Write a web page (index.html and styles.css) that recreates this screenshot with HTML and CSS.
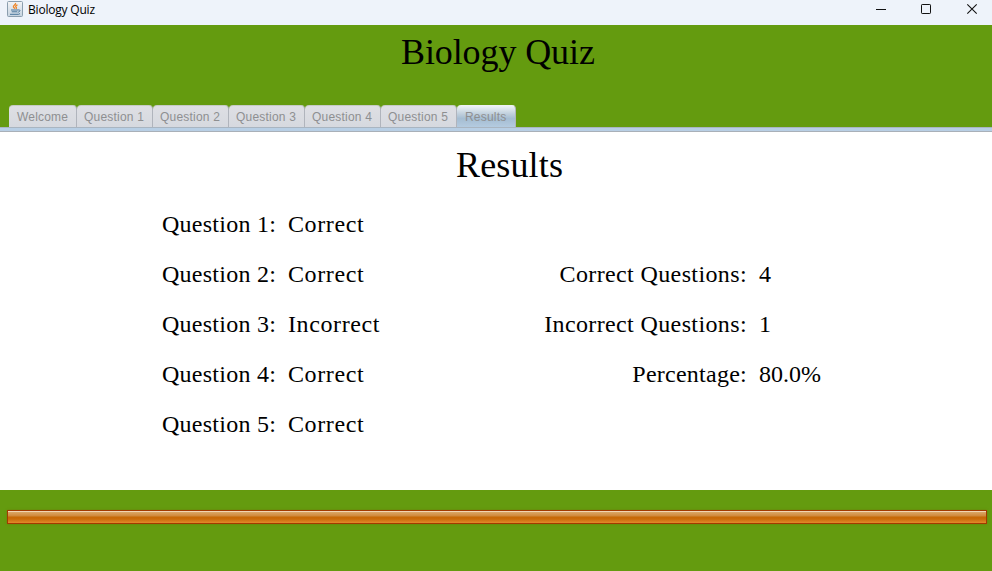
FILE: index.html
```html
<!DOCTYPE html>
<html lang="en">
<head>
<meta charset="utf-8">
<title>Biology Quiz</title>
<link rel="stylesheet" href="styles.css">
</head>
<body>
<header class="titlebar">
  <svg class="app-icon" width="16" height="16" viewBox="0 0 16 16">
    <defs><linearGradient id="tile" x2="0" y2="1"><stop stop-color="#f2f4f6"/><stop offset="1" stop-color="#c5d3df"/></linearGradient></defs>
    <rect x=".5" y=".5" width="15" height="15" rx="1" fill="url(#tile)" stroke="#8b9eae"/>
    <path d="M8.500 2c1 1.800-3 2.300-2 4 .3.700 1 1 1.200 1.700M10.500 3.900c-2.500 1-2 1.800-1.200 2.500.3.500 0 1-.5 1.300" fill="none" stroke="#ef8424" stroke-width="1.300"/>
    <path d="M4 9h7M4.700 10.800h5.500M3 13.300h8.500l1.500-.7M11 9c3-.6 2.300 2-.3 2.200" fill="none" stroke="#48759a"/>
  </svg>
  <span class="window-title">Biology Quiz</span>
  <svg class="controls" width="132" height="20" viewBox="0 0 132 20" fill="none" stroke="#111">
    <path d="M16 9.500h10"/>
    <rect x="61.500" y="4.500" width="9" height="9" rx=".7"/>
    <path d="M107.300 4.300l9.400 9.400M116.700 4.300l-9.400 9.400" stroke-width="1.100"/>
  </svg>
</header>
<h1 class="heading">Biology Quiz</h1>
<nav class="tabs">
  <span class="tab first">Welcome</span>
  <span class="tab">Question 1</span>
  <span class="tab">Question 2</span>
  <span class="tab">Question 3</span>
  <span class="tab">Question 4</span>
  <span class="tab">Question 5</span>
  <span class="tab selected">Results</span>
</nav>
<div class="tab-strip"></div>
<main class="panel">
  <h2 class="results-title"><span>Results</span></h2>
  <div class="columns">
    <dl class="answers">
      <dt>Question 1:</dt><dd>Correct</dd>
      <dt>Question 2:</dt><dd>Correct</dd>
      <dt>Question 3:</dt><dd>Incorrect</dd>
      <dt>Question 4:</dt><dd>Correct</dd>
      <dt>Question 5:</dt><dd>Correct</dd>
    </dl>
    <dl class="summary">
      <dt class="long">Correct Questions:</dt><dd class="num">4</dd>
      <dt class="long">Incorrect Questions:</dt><dd class="num">1</dd>
      <dt>Percentage:</dt><dd class="num">80.0%</dd>
    </dl>
  </div>
</main>
<footer class="footer"><div class="progress"></div></footer>
</body>
</html>
```
FILE: styles.css
```css
* { box-sizing: border-box; }
body {
  margin: 0;
  width: 992px;
  height: 571px;
  overflow: hidden;
  background: #649b0f;
  color: #000;
  font-family: "Liberation Serif", serif;
}
.titlebar {
  display: flex;
  align-items: flex-start;
  height: 25px;
  padding: 1px 0 0 7px;
  background: #eef3fa;
}
.window-title {
  margin-left: 5px;
  font: 12px/17px "Open Sans", sans-serif;
  letter-spacing: -.2px;
}
.controls { margin: -1px 0 0 auto; }
.heading {
  height: 80px;
  margin: 0;
  padding: 6px 0 0 401px;
  font-size: 36px;
  font-weight: 400;
  line-height: 42px;
  letter-spacing: -.1px;
}
.tabs {
  display: flex;
  height: 22px;
  padding-left: 9px;
}
.tab {
  width: 76px;
  height: 22px;
  padding-left: 7px;
  border-right: 1px solid #b0b4bc;
  border-top: 1px solid #c6cbc5;
  border-radius: 4px 4px 0 0;
  background: linear-gradient(#dedfe4, #d6d9df);
  color: #8e8f91;
  font: 12px/22px "Liberation Sans", sans-serif;
  letter-spacing: .2px;
  white-space: nowrap;
}
.tab.first {
  width: 68px;
  padding-left: 8px;
}
.tab.selected {
  width: 59px;
  padding-left: 8px;
  border-top-color: #edf2f3;
  background: linear-gradient(#edf2f6, #bdcddb 40%, #a5bdd2 60%, #b4cbe0);
}
.tab-strip {
  height: 5px;
  border-top: 1px solid #a9b5c1;
  border-bottom: 1px solid #a9b0b8;
  background: #b8cfe5;
}
.panel {
  height: 358px;
  background: #fff;
}
.results-title {
  margin: 0;
  padding: 12px 0 0 456px;
  font-size: 36px;
  font-weight: 400;
  line-height: 42px;
  letter-spacing: .15px;
}
.columns {
  display: flex;
  padding-top: 13px;
  font-size: 24px;
  line-height: 50px;
}
.answers, .summary {
  display: grid;
  grid-auto-rows: 50px;
  column-gap: 12px;
  margin: 0;
}
.answers {
  grid-template-columns: 114px 120px;
  margin-left: 162px;
}
.summary {
  grid-template-columns: 219px 100px;
  margin: 50px 0 0 120px;
}
dt { letter-spacing: .25px; white-space: nowrap; }
dd { margin: 0; letter-spacing: .6px; }
.summary dt { text-align: right; }
.summary .long { letter-spacing: .38px; }
.summary .num { letter-spacing: 0; }
.footer { padding: 20px 5px 0 7px; }
.progress {
  height: 14px;
  border: 1px solid #a23a00;
  background: linear-gradient(#f1d4b3 0 1px, #dba766 1px, #d0883a 5px, #c66805 6px, #c96b0a 8px, #e08a2b);
  box-shadow: 0 0 2px rgba(120, 90, 0, .5);
}
```
